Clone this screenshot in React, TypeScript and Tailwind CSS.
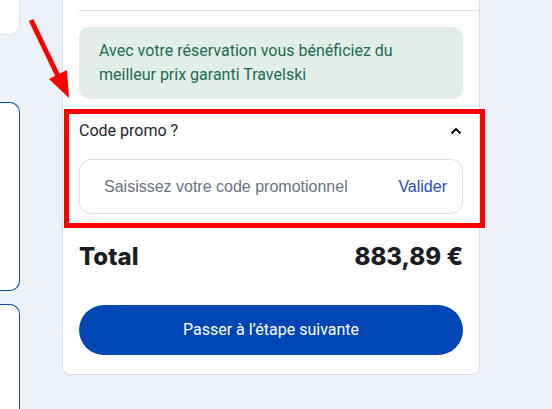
import React from "react";

export default function App() {
  return (
    <div className="relative h-[409px] w-[552px] overflow-hidden bg-[#edf1f9]" style={{ fontFamily: "Roboto, 'Liberation Sans', sans-serif" }}>
      <div className="flex h-full">
        {/* left column */}
        <div className="flex w-[20px] shrink-0 flex-col">
          <div className="h-[35px] shrink-0 rounded-br-[10px] border-b border-r border-[#dfe3ea] bg-white" />
          <div className="mt-[67px] h-[189px] shrink-0 rounded-r-[10px] border-y border-r border-[#0a46b8] bg-white" />
          <div className="mt-[13px] h-[120px] shrink-0 rounded-tr-[10px] border-t border-r border-[#0a46b8] bg-white" />
        </div>
        {/* main card */}
        <div className="ml-[42px] flex h-[375px] w-[418px] shrink-0 flex-col rounded-b-[8px] border-x border-b border-[#dcdfe5] bg-white px-4 pb-[18px]">
          <div className="-mr-4 mt-[10px] h-px shrink-0 bg-[#dedfe3]" />
          <div className="mt-4 shrink-0 rounded-[10px] bg-[#e4eee9] px-5 py-[12px] text-[16px] leading-[24px] text-[#1b6a50]">
            Avec votre réservation vous bénéficiez du meilleur prix garanti Travelski
          </div>
          <div className="mt-[17px] flex h-[30px] shrink-0 items-center justify-between">
            <span className="text-[16px] text-[#1f2328]">Code promo ?</span>
            <svg width="12" height="8" viewBox="0 0 12 8" className="mr-[1px]">
              <polyline points="1.5,6.5 6,2 10.5,6.5" fill="none" stroke="#111" strokeWidth="2" />
            </svg>
          </div>
          <div className="mt-[13px] flex h-[55px] shrink-0 items-center justify-between rounded-[12px] border border-[#dcdfe5] pl-[24px] pr-[15px]" style={{ fontFamily: "'Liberation Sans', Arial, sans-serif" }}>
            <span className="text-[16px] text-[#6b7280]">Saisissez votre code promotionnel</span>
            <span className="text-[16px] text-[#2449c6]">Valider</span>
          </div>
          <div className="mt-[27px] flex h-[32px] shrink-0 items-center justify-between text-[24px] font-extrabold text-[#1c1d22]" style={{ fontFamily: "Inter, sans-serif" }}>
            <span>Total</span>
            <span>883,89 €</span>
          </div>
          <button className="mt-[32px] flex h-[50px] w-full shrink-0 items-center justify-center rounded-full bg-[#0046b5] text-[16px] text-white">
            Passer à l’étape suivante
          </button>
        </div>
      </div>
      {/* annotation overlay */}
      <div className="absolute left-[64px] top-[109px] h-[119px] w-[421px] border-[5px] border-[#ff0000]" />
      <svg className="absolute left-0 top-0" width="100" height="110">
        <line x1="31" y1="20" x2="58" y2="76" stroke="#ff0000" strokeWidth="5" />
        <polygon points="49,79 67,70 69,98" fill="#ff0000" />
      </svg>
    </div>
  );
}
